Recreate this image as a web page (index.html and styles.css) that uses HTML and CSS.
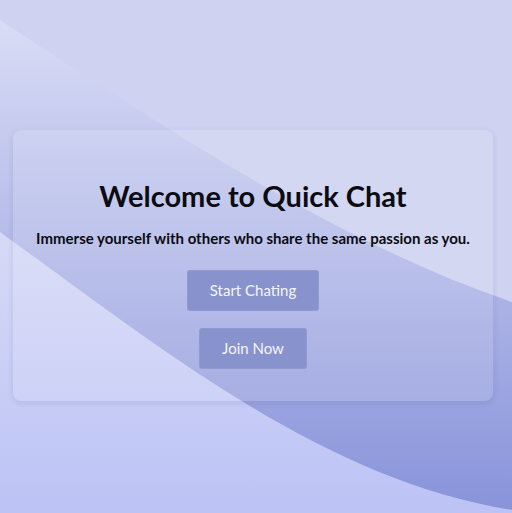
FILE: index.html
```html
<!DOCTYPE html>
<html lang="en">
<head>
<meta charset="utf-8">
<title>Quick Chat</title>
<link rel="stylesheet" href="styles.css">
</head>
<body>
<svg class="bg-waves" viewBox="0 0 512 513" preserveAspectRatio="none" aria-hidden="true">
  <defs>
    <linearGradient id="lowGrad" gradientUnits="userSpaceOnUse" x1="0" y1="230" x2="0" y2="513">
      <stop offset="0" stop-color="#d7daf6"/>
      <stop offset="1" stop-color="#bcc3f5"/>
    </linearGradient>
    <linearGradient id="bandGrad" gradientUnits="userSpaceOnUse" x1="0" y1="0" x2="0" y2="513">
      <stop offset="0" stop-color="#dcdff6"/>
      <stop offset="1" stop-color="#8893da"/>
    </linearGradient>
  </defs>
  <path d="M0,232 C150,340 320,480 512,510 L512,513 L0,513 Z" fill="url(#lowGrad)"/>
  <path d="M0,20 C150,118 330,240 512,302 L512,510 C320,480 150,340 0,232 Z" fill="url(#bandGrad)"/>
</svg>
<main class="page">
  <section class="card">
    <h1 class="title">Welcome to Quick Chat</h1>
    <p class="subtitle">Immerse yourself with others who share the same passion as you.</p>
    <div class="actions">
      <button class="btn">Start Chating</button>
      <button class="btn">Join Now</button>
    </div>
  </section>
</main>
</body>
</html>
```
FILE: styles.css
```css
html, body {
  margin: 0;
  padding: 0;
  height: 100%;
}
body {
  background: #cfd2f0;
  font-family: Lato, "Open Sans", sans-serif;
  position: relative;
  overflow: hidden;
}
.bg-waves {
  position: absolute;
  left: 0;
  top: 0;
  width: 512px;
  height: 513px;
  z-index: 0;
}
.page {
  position: relative;
  z-index: 1;
  padding-top: 130px;
  padding-left: 13px;
}
.card {
  width: 480px;
  box-sizing: border-box;
  background: rgba(255, 255, 255, 0.12);
  border-radius: 8px;
  box-shadow: 0 2px 6px rgba(40, 50, 120, 0.12);
  padding: 48px 0 32px;
  display: flex;
  flex-direction: column;
  align-items: center;
  text-align: center;
}
.title {
  margin: 0;
  font-size: 29px;
  font-weight: 700;
  color: #0b0b12;
  line-height: 35px;
}
.subtitle {
  margin: 16px 0 0;
  font-size: 15px;
  font-weight: 700;
  color: #0b0b12;
  line-height: 18px;
}
.actions {
  margin-top: 23px;
  display: flex;
  flex-direction: column;
  align-items: center;
  gap: 17px;
}
.btn {
  font-family: Lato, "Open Sans", sans-serif;
  font-size: 15px;
  line-height: 19px;
  height: 41px;
  box-sizing: border-box;
  color: #f4f5fb;
  background: #8892cc;
  border: 1px solid rgba(255, 255, 255, 0.08);
  border-radius: 3px;
  padding: 0 22px;
}
```
